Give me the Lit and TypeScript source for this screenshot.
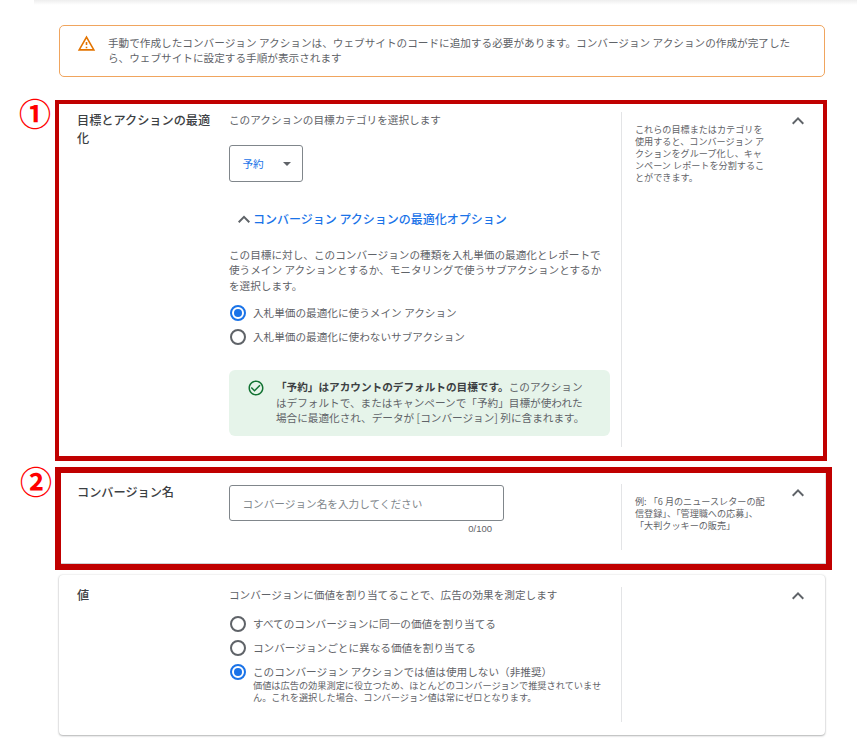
import { LitElement, html, css, svg } from "lit";
import { customElement } from "lit/decorators.js";

const chevron = svg`<path d="M12 8l-6 6 1.41 1.41L12 10.83l4.59 4.58L18 14z"/>`;

@customElement("app-root")
export class AppRoot extends LitElement {
  static styles = css`
    :host {
      display: block;
      width: 857px;
      height: 743px;
      overflow: hidden;
      position: relative;
      background: #fff;
      font-family: "Noto Sans CJK JP", "Noto Sans", sans-serif;
      color: #5f6368;
      font-size: 10.64px;
      line-height: 15.2px;
    }
    .topbar {
      margin-left: 34px;
      height: 5px;
      background: linear-gradient(#eeeeee, #ffffff);
    }
    .alert {
      box-sizing: border-box;
      margin: 20px 0 0 59px;
      width: 766px;
      height: 52px;
      border: 1px solid #f0a55e;
      border-radius: 5px;
      display: flex;
      align-items: flex-start;
      padding: 9px 20px 0 17px;
      gap: 12px;
    }
    .alert svg { width: 19px; height: 19px; fill: #e37400; flex: none; margin-top: -1px; }
    .alert p { margin: 0; }
    .marked {
      box-sizing: border-box;
      position: relative;
      margin-left: 55px;
      border: solid #c00000;
      background: #fff;
    }
    .m1 { width: 772px; height: 361px; margin-top: 23px; border-width: 4px 4px 5px 4px; }
    .m2 { width: 777px; height: 103px; margin-top: 6px; border-width: 6px; }
    .m1 .row { padding: 8px 0 0 18px; }
    .m2 .row { padding: 11px 0 0 16px; }
    .m2 { box-shadow: inset 0 -1px 0 #cfd1d4, inset -1px 0 0 #e3e4e6; }
    .num {
      position: absolute;
      left: -40px;
      top: -11px;
      color: #ff0000;
      font-size: 32px;
      line-height: 38px;
      font-weight: 700;
    }
    .m2 .num { top: -12px; left: -41px; }
    .row {
      display: grid;
      grid-template-columns: 152px 392px 171px 24px;
      align-items: start;
    }
    .label {
      color: #3c4043;
      font-size: 12.16px;
      font-weight: 500;
      line-height: 18px;
      padding-right: 12px;
      margin-top: -1px;
    }
    .main { padding-right: 11px; }
    .side {
      border-left: 1px solid #e3e4e6;
      padding-left: 13px;
      font-size: 9.12px;
      line-height: 12.1px;
      align-self: stretch;
    }
    .side p { margin: 11px 0 0; width: 132px; }
    .chev { width: 24px; height: 24px; fill: #5f6368; margin: -3px 0 0 -6px; }
    .s1 { height: 335px; }
    .s2 { height: 66px; }
    .s3 { height: 135px; }
    .sub { margin: 0; }
    .select {
      box-sizing: border-box;
      margin-top: 18px;
      width: 74px;
      height: 37px;
      border: 1px solid #80868b;
      border-radius: 3px;
      display: flex;
      align-items: center;
      justify-content: space-between;
      padding: 0 11px 0 12.5px;
      color: #1a73e8;
    }
    .select svg { width: 8px; height: 4px; fill: #5f6368; }
    .opt {
      display: flex;
      align-items: center;
      margin-top: 25px;
      color: #1a73e8;
      font-size: 12px;
      font-weight: 500;
      line-height: 18px;
      margin-left: 4px;
    }
    .opt svg { width: 24px; height: 24px; fill: #5f6368; margin: 0 -3px 0 -1px; flex: none; transform: translateY(0.5px); }
    .para { margin: 16px 0 0; }
    .radios { display: flex; flex-direction: column; gap: 8px; margin-top: 12px; }
    .radio { display: flex; align-items: flex-start; gap: 7px; }
    .dot {
      box-sizing: border-box;
      flex: none;
      width: 16px;
      height: 16px;
      border: 2px solid #5f6368;
      border-radius: 50%;
      margin-left: 1px;
      display: flex;
      align-items: center;
      justify-content: center;
    }
    .dot.on { border-color: #1a73e8; }
    .dot.on::after {
      content: "";
      width: 8px;
      height: 8px;
      border-radius: 50%;
      background: #1a73e8;
    }
    .tiny { display: block; font-size: 9.2px; line-height: 12px; color: #5f6368; }
    .note {
      box-sizing: border-box;
      margin-top: 25px;
      height: 66px;
      background: #e6f4ea;
      border-radius: 6px;
      display: flex;
      gap: 11px;
      padding: 9.5px 22px 0 18px;
      line-height: 15.5px;
    }
    .note svg { width: 18px; height: 18px; fill: #137333; flex: none; }
    .note p { margin: 0; }
    .note b { font-weight: 700; color: #3c4043; }
    .input {
      box-sizing: border-box;
      width: 275px;
      height: 36px;
      border: 1px solid #80868b;
      border-radius: 3px;
      display: flex;
      align-items: center;
      padding: 1px 0 0 12.5px;
      color: #80868b;
      margin-top: 1px;
    }
    .count { width: 263px; text-align: right; font-size: 9.5px; line-height: 12px; margin-top: 2px; color: #5f6368; font-family: "Liberation Sans", sans-serif; }
    .plain {
      box-sizing: border-box;
      width: 766px;
      height: 160px;
      margin: 5px 0 0 59px;
      background: #fff;
      border-radius: 4px;
      box-shadow: 0 0 2px rgba(60, 64, 67, 0.2), 0 1px 2px rgba(60, 64, 67, 0.35);
    }
    .plain .row { padding: 12px 0 0 18px; }
    .plain .radios { margin-top: 14px; }
  `;

  private radio(on: boolean, text: string, tiny?: string) {
    return html`<div class="radio">
      <span class="dot ${on ? "on" : ""}"></span>
      <span>${text}${tiny ? html`<span class="tiny">${tiny}</span>` : ""}</span>
    </div>`;
  }

  private chev() {
    return html`<svg class="chev" viewBox="0 0 24 24">${chevron}</svg>`;
  }

  render() {
    return html`
      <div class="topbar"></div>
      <div class="alert">
        <svg viewBox="0 0 24 24"><path d="M12 5.99L19.53 19H4.47L12 5.99M12 2L1 21h22L12 2zm1 14h-2v2h2v-2zm0-6h-2v4h2v-4z"/></svg>
        <p>手動で作成したコンバージョン アクションは、ウェブサイトのコードに追加する必要があります。コンバージョン アクションの作成が完了したら、ウェブサイトに設定する手順が表示されます</p>
      </div>

      <section class="marked m1">
        <span class="num">①</span>
        <div class="row">
          <div class="label">目標とアクションの最適化</div>
          <div class="main">
            <p class="sub">このアクションの目標カテゴリを選択します</p>
            <div class="select">予約<svg viewBox="0 0 8 4"><path d="M0 0h8L4 4z"/></svg></div>
            <div class="opt"><svg viewBox="0 0 24 24">${chevron}</svg><span>コンバージョン アクションの最適化オプション</span></div>
            <p class="para">この目標に対し、このコンバージョンの種類を入札単価の最適化とレポートで使うメイン アクションとするか、モニタリングで使うサブアクションとするかを選択します。</p>
            <div class="radios">
              ${this.radio(true, "入札単価の最適化に使うメイン アクション")}
              ${this.radio(false, "入札単価の最適化に使わないサブアクション")}
            </div>
            <div class="note">
              <svg viewBox="0 0 24 24"><path d="M16.59 7.58L10 14.17l-3.59-3.58L5 12l5 5 8-8zM12 2C6.48 2 2 6.48 2 12s4.48 10 10 10 10-4.48 10-10S17.52 2 12 2zm0 18c-4.42 0-8-3.58-8-8s3.58-8 8-8 8 3.58 8 8-3.58 8-8 8z"/></svg>
              <p><b>「予約」はアカウントのデフォルトの目標です。</b>このアクションはデフォルトで、またはキャンペーンで「予約」目標が使われた場合に最適化され、データが [コンバージョン] 列に含まれます。</p>
            </div>
          </div>
          <div class="side s1"><p>これらの目標またはカテゴリを使用すると、コンバージョン アクションをグループ化し、キャンペーン レポートを分割することができます。</p></div>
          ${this.chev()}
        </div>
      </section>

      <section class="marked m2">
        <span class="num">②</span>
        <div class="row">
          <div class="label">コンバージョン名</div>
          <div class="main">
            <div class="input">コンバージョン名を入力してください</div>
            <div class="count">0/100</div>
          </div>
          <div class="side s2"><p>例: 「6 月のニュースレターの配信登録」、「管理職への応募」、「大判クッキーの販売」</p></div>
          ${this.chev()}
        </div>
      </section>

      <section class="plain">
        <div class="row">
          <div class="label">値</div>
          <div class="main">
            <p class="sub">コンバージョンに価値を割り当てることで、広告の効果を測定します</p>
            <div class="radios">
              ${this.radio(false, "すべてのコンバージョンに同一の価値を割り当てる")}
              ${this.radio(false, "コンバージョンごとに異なる価値を割り当てる")}
              ${this.radio(true, "このコンバージョン アクションでは値は使用しない（非推奨）", "価値は広告の効果測定に役立つため、ほとんどのコンバージョンで推奨されていません。これを選択した場合、コンバージョン値は常にゼロとなります。")}
            </div>
          </div>
          <div class="side s3"></div>
          ${this.chev()}
        </div>
      </section>
    `;
  }
}
